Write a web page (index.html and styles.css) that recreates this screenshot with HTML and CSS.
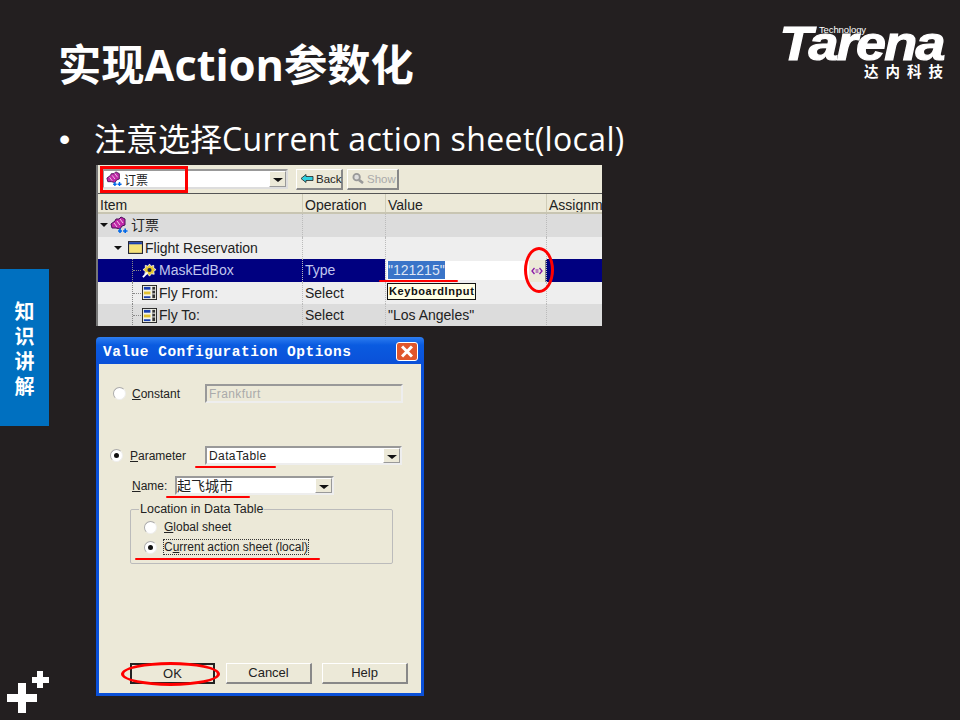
FILE: index.html
```html
<!DOCTYPE html>
<html lang="zh-CN">

<head>
    <meta charset="UTF-8">
    <title>实现Action参数化</title>
    <link rel="stylesheet" href="styles.css">
</head>

<body>
    <svg class="defs" width="0" height="0">
        <symbol id="action" viewBox="0 0 18 18">
            <path d="M1 8 L5 5 L6 3 L9 3 L11 1 L15 3 L15 9 L12 10 L10 13 L6 12 L2 12 Z" fill="#c02aa8" stroke="#4a1058"/>
            <path d="M4 7 L7 11 M7 5 L10 9 M10 3 L13 7" stroke="#f2c8ea"/>
            <path d="M8 15 H12 M10 12.500 V17 M13 15 H17.500 M15.200 12.500 V17" stroke="#0068e8" stroke-width="1.600"/>
        </symbol>
        <symbol id="list" viewBox="0 0 16 16">
            <rect x="0.500" y="0.500" width="15" height="15" fill="#f4f4e8" stroke="#222"/>
            <rect x="2" y="2" width="7" height="3" fill="#1a3fb0"/>
            <rect x="2" y="7" width="7" height="3" fill="#e0c030"/>
            <rect x="2" y="12" width="7" height="2" fill="#1a3fb0"/>
            <rect x="11" y="2" width="3" height="12" fill="#333"/>
            <path d="M11 5.500 H14 M11 9.500 H14" stroke="#fff"/>
        </symbol>
    </svg>

    <div class="slide">
        <header class="top">
            <h1 class="title">实现Action参数化</h1>
            <div class="logo">
                <span class="logo-small">Technology</span>
                <span class="logo-name">Tarena</span>
                <span class="logo-cn">达内科技</span>
            </div>
        </header>

        <p class="point"><span class="dot">•</span>注意选择<span class="point-en">Current action sheet(local)</span></p>

        <!-- 上面的截图 -->
        <div class="shot">
            <div class="toolbar">
                <div class="combo">
                    <svg class="ico-combo"><use href="#action"/></svg>
                    <span class="combo-text">订票</span>
                    <span class="arrow"></span>
                </div>
                <div class="tool-btn btn-back">
                    <svg class="back-ico" viewBox="0 0 14 10"><path d="M1 5 L6 1 V3 H13 V7 H6 V9 Z" fill="#30d0e0" stroke="#222" stroke-width="0.800"/></svg>Back
                </div>
                <div class="tool-btn btn-show off">
                    <svg class="back-ico" viewBox="0 0 14 12"><circle cx="5.500" cy="4.500" r="3.500" fill="#ddd" stroke="#999" stroke-width="2"/><path d="M8 7.500 L12.500 11" stroke="#999" stroke-width="2.800"/></svg>Show
                </div>
            </div>
            <div class="grid-row head">
                <div>Item</div><div>Operation</div><div>Value</div><div>Assignment</div>
            </div>
            <div class="grid-row odd">
                <div class="item"><span class="twist"></span><svg class="ico"><use href="#action"/></svg><span class="cn">订票</span></div><div></div><div></div><div></div>
            </div>
            <div class="grid-row even">
                <div class="item lvl1"><span class="twist"></span>
                    <svg class="ico-sm" viewBox="0 0 14 12"><rect x="0.500" y="0.500" width="13" height="11" fill="#f6e27a" stroke="#223"/><rect x="1" y="1" width="12" height="2" fill="#1a3fb0"/></svg>Flight Reservation</div><div></div><div></div><div></div>
            </div>
            <div class="grid-row sel">
                <div class="item lvl2">
                    <svg class="ico-sm" viewBox="0 0 16 16"><path d="M8 1 L9.500 3.500 L12.500 2.500 L12.500 5.500 L15 7 L12.500 9 L13 12 L10 11.500 L8 14 L6 11.500 L3 12 L3.500 9 L1 7 L3.500 5.500 L3.500 2.500 L6.500 3.500 Z" fill="#e8c830" stroke="#fff" stroke-width="0.800"/><circle cx="8" cy="7.500" r="2.200" fill="#1a2050"/><path d="M1 15 L6 10" stroke="#fff" stroke-width="2"/></svg>MaskEdBox</div>
                <div>Type</div>
                <div class="edit">
                    <div class="edit-box"><span class="picked">"121215"</span></div>
                    <span class="param-btn"><svg class="param-ico" viewBox="0 0 12 8"><path d="M3.500 1 L1 4 L3.500 7 M8.500 1 L11 4 L8.500 7" fill="none" stroke="#8a1aa8" stroke-width="1.300"/><path d="M4.500 3 H7.500 M4.500 5 H7.500" stroke="#8a1aa8"/></svg></span>
                </div>
                <div></div>
            </div>
            <div class="grid-row even">
                <div class="item lvl2"><svg class="ico-sm"><use href="#list"/></svg>Fly From:</div><div>Select</div><div></div><div></div>
            </div>
            <div class="grid-row odd">
                <div class="item lvl2"><svg class="ico-sm"><use href="#list"/></svg>Fly To:</div><div>Select</div><div>"Los Angeles"</div><div></div>
            </div>
            <div class="tip">KeyboardInput</div>
            <div class="mark box-combo"></div>
            <div class="mark line line-value"></div>
            <div class="mark ring ring-param"></div>
        </div>

        <!-- 下面的对话框 -->
        <div class="dialog">
            <div class="dlg-title">
                <span>Value Configuration Options</span>
                <span class="close"></span>
            </div>
            <div class="dlg-body">
                <div class="row row-const">
                    <span class="radio"></span>
                    <label class="lbl w-const"><u>C</u>onstant</label>
                    <div class="field off">Frankfurt</div>
                </div>
                <div class="row row-param">
                    <span class="radio on"></span>
                    <label class="lbl w-param"><u>P</u>arameter</label>
                    <div class="field select w-select">DataTable<span class="arrow"></span></div>
                </div>
                <div class="row row-name">
                    <label class="lbl w-name"><u>N</u>ame:</label>
                    <div class="field select w-name-select">起飞城市<span class="arrow"></span></div>
                </div>
                <fieldset class="group">
                    <legend>Location in Data Table</legend>
                    <div class="row">
                        <span class="radio"></span>
                        <label class="lbl"><u>G</u>lobal sheet</label>
                    </div>
                    <div class="row">
                        <span class="radio on"></span>
                        <label class="lbl focus">C<u>u</u>rrent action sheet (local)</label>
                    </div>
                </fieldset>
                <div class="buttons">
                    <div class="btn default">OK</div>
                    <div class="btn">Cancel</div>
                    <div class="btn">Help</div>
                </div>
            </div>
            <div class="mark line line-data"></div>
            <div class="mark line line-name"></div>
            <div class="mark line line-current"></div>
            <div class="mark ring ring-ok"></div>
        </div>

        <div class="side-tab"><span>知</span><span>识</span><span>讲</span><span>解</span></div>

        <svg class="plus" viewBox="0 0 44 44">
            <rect x="0" y="23" width="30" height="8" fill="#fff"/>
            <rect x="11" y="12" width="8" height="30" fill="#fff"/>
            <rect x="25" y="6" width="17" height="6" fill="#fff"/>
            <rect x="30" y="0" width="6" height="17" fill="#fff"/>
        </svg>
    </div>
</body>

</html>
```

FILE: styles.css
```css
* {
    box-sizing: border-box;
}

body {
    margin: 0;
    background: #231f20;
}

.defs {
    display: none;
}

.slide {
    position: relative;
    width: 960px;
    height: 720px;
    overflow: hidden;
    background: #231f20;
    color: #fff;
    font-family: "Open Sans", "Noto Sans CJK SC", sans-serif;
}

.top {
    display: flex;
    justify-content: space-between;
    align-items: flex-start;
    height: 114px;
    padding: 26px 16px 0 58px;
}

.title {
    margin: 12px 0 0;
    font-size: 43.300px;
    line-height: 54px;
    font-weight: 700;
}

.logo {
    display: flex;
    flex-direction: column;
    align-items: flex-end;
    width: 162px;
    font-family: "Liberation Sans", "Noto Sans CJK SC", sans-serif;
}

.logo-small {
    height: 8px;
    margin-right: 78px;
    font-size: 9.500px;
    line-height: 8px;
    letter-spacing: -0.1px;
}

.logo-name {
    height: 34px;
    margin-top: -7px;
    font-size: 48px;
    line-height: 34px;
    font-weight: 700;
    font-style: italic;
    letter-spacing: -1.500px;
    -webkit-text-stroke: 1.200px #fff;
    transform: scaleX(1.12);
    transform-origin: right center;
}

.logo-cn {
    margin-top: 4px;
    margin-right: -6px;
    font-size: 14.500px;
    line-height: 15px;
    font-weight: 700;
    letter-spacing: 7px;
}

.point {
    display: flex;
    height: 44px;
    margin: 3px 0 4px 59px;
    font-size: 32px;
    line-height: 44px;
}

.point-en {
    letter-spacing: 0.370px;
}

.dot {
    width: 35px;
    font-family: "Liberation Sans", sans-serif;
}

/* screenshot */
.shot {
    position: relative;
    width: 506px;
    height: 161px;
    margin-left: 96px;
    overflow: hidden;
    background: #ece9d8;
    color: #222;
    font-family: "Liberation Sans", "Noto Sans CJK SC", sans-serif;
    font-size: 14px;
    border-left: 2px solid #777;
}

.toolbar {
    display: flex;
    align-items: center;
    gap: 8px;
    height: 29px;
    padding: 0 0 0 4px;
    border-bottom: 1px solid #555;
    font-size: 12px;
}

.combo {
    position: relative;
    display: flex;
    align-items: center;
    width: 186px;
    height: 20px;
    padding-left: 2px;
    background: #fff;
    border: 2px solid #999;
    border-right-color: #ddd;
    border-bottom-color: #ddd;
}

.ico-combo {
    flex: none;
    width: 16px;
    height: 16px;
}

.combo-text {
    margin-left: 2px;
    font-size: 12px;
}

.arrow {
    position: absolute;
    top: 0;
    right: 0;
    bottom: 0;
    width: 17px;
    background: #ece9d8;
    border: 1px solid #999;
    border-top-color: #fff;
    border-left-color: #fff;
}

.arrow::after {
    content: "";
    position: absolute;
    top: 6px;
    left: 3px;
    border: 5px solid transparent;
    border-top: 4px solid #111;
    border-bottom: 0;
}

.tool-btn {
    display: flex;
    align-items: center;
    gap: 2px;
    height: 21px;
    padding: 0 3px;
    background: #ece9d8;
    border: 1px solid #fff;
    border-right: 2px solid #888;
    border-bottom: 2px solid #888;
}

.btn-back {
    width: 47px;
    font-size: 11.500px;
}

.btn-show {
    width: 52px;
    margin-left: -4px;
    font-size: 11.500px;
}

.tool-btn.off {
    color: #aaa;
}

.back-ico {
    flex: none;
    width: 14px;
    height: 11px;
}

.ico {
    flex: none;
    width: 18px;
    height: 18px;
}

.ico-sm {
    flex: none;
    width: 15px;
    height: 15px;
    margin-right: 2px;
}

.grid-row {
    display: grid;
    grid-template-columns: 204px 83px 161px 58px;
    height: 22.500px;
    line-height: 22px;
}

.grid-row > div {
    padding-left: 2px;
    white-space: nowrap;
    overflow: hidden;
    border-left: 1px dotted #bbb;
}

.grid-row > div:first-child {
    border-left: 0;
}

.head {
    height: 20px;
    line-height: 22px;
    border-bottom: 2px solid #c8c5b2;
}

.head > div {
    border-left: 1px solid #d0cdb8;
}

.odd {
    background: #dcdcdc;
}

.even {
    background: #eeeeee;
}

.sel {
    background: #000080;
    color: #c0c6ee;
}

.item {
    position: relative;
    display: flex;
    align-items: center;
}

.lvl1 {
    padding-left: 16px !important;
}

.lvl2 {
    padding-left: 44px !important;
}

/* tree lines */
.lvl2::before {
    content: "";
    position: absolute;
    top: 0;
    bottom: 0;
    left: 34px;
    border-left: 1px dotted #888;
}

.lvl2::after {
    content: "";
    position: absolute;
    top: 11px;
    left: 35px;
    width: 8px;
    border-top: 1px dotted #888;
}

.twist {
    flex: none;
    width: 0;
    height: 0;
    margin-right: 2px;
    border: 4px solid transparent;
    border-top: 4px solid #111;
    border-bottom: 0;
}

.cn {
    margin-left: 3px;
}

.lvl1 .ico-sm {
    margin-left: 4px;
}

.edit {
    display: flex;
    padding-left: 0 !important;
    background: #eee;
}

.edit-box {
    flex: 1;
    height: 19px;
    margin: 2px 0 0 1px;
    padding-left: 1px;
    background: #fff;
    line-height: 18px;
    color: #222;
}

.picked {
    display: inline-block;
    background: #3a74c8;
    color: #dfe6f5;
}

.param-btn {
    display: flex;
    align-items: center;
    justify-content: center;
    width: 17px;
    margin-top: 1px;
    background: #ece9d8;
    border-right: 1px solid #888;
}

.param-ico {
    width: 12px;
    height: 8px;
}

.tip {
    position: absolute;
    top: 118px;
    left: 289px;
    height: 17px;
    padding: 0 1px;
    background: #ffffe6;
    border: 1px solid #111;
    color: #111;
    font-size: 11px;
    font-weight: 700;
    line-height: 15px;
    letter-spacing: 0.600px;
}

/* red annotations */
.mark {
    position: absolute;
    pointer-events: none;
}

.box-combo {
    top: 1px;
    left: 2px;
    width: 88px;
    height: 27px;
    border: 3px solid #f00;
}

.line {
    height: 2px;
    background: #f00;
    border-radius: 1px;
}

.line-value {
    top: 115px;
    left: 281px;
    width: 79px;
}

.ring {
    border: 3px solid #f00;
    border-radius: 50%;
}

.ring-param {
    top: 82px;
    left: 426px;
    width: 30px;
    height: 46px;
}

/* dialog */
.dialog {
    position: relative;
    display: flex;
    flex-direction: column;
    width: 328px;
    height: 359px;
    margin: 11px 0 0 96px;
    font-family: "Liberation Sans", "Noto Sans CJK SC", sans-serif;
    font-size: 12px;
    color: #222;
}

.dlg-title {
    display: flex;
    align-items: center;
    justify-content: space-between;
    height: 27px;
    padding: 2px 6px 0 7px;
    background: linear-gradient(#2d7df0, #0a5be0 30%, #0a50d8);
    border-radius: 4px 4px 0 0;
    color: #fff;
    font-family: "Liberation Mono", monospace;
    font-size: 14.500px;
    font-weight: 700;
    letter-spacing: 0.500px;
}

.close {
    position: relative;
    width: 22px;
    height: 19px;
    background: #e0562c;
    border: 1px solid #fff;
    border-radius: 3px;
}

.close::before,
.close::after {
    content: "";
    position: absolute;
    top: 7px;
    left: 3px;
    width: 14px;
    height: 3px;
    background: #fff;
    transform: rotate(45deg);
}

.close::after {
    transform: rotate(-45deg);
}

.dlg-body {
    flex: 1;
    display: flex;
    flex-direction: column;
    padding-top: 20px;
    background: #ece9d8;
    border: 3px solid #0a50d8;
    border-top: 0;
}

.row {
    display: flex;
    align-items: center;
}

.row-const {
    margin-left: 14px;
    gap: 6px;
}

.row-param {
    margin: 43px 0 0 11px;
    gap: 7px;
}

.row-name {
    margin: 11px 0 0 33px;
}

.radio {
    position: relative;
    flex: none;
    width: 13px;
    height: 13px;
    background: #fff;
    border: 1px solid #aaa;
    border-right-color: #eee;
    border-bottom-color: #eee;
    border-radius: 50%;
}

.radio.on::after {
    content: "";
    position: absolute;
    top: 3px;
    left: 3px;
    width: 5px;
    height: 5px;
    background: #111;
    border-radius: 50%;
}

.w-const {
    width: 67px;
}

.w-param {
    width: 68px;
}

.w-name {
    width: 43px;
}

.field {
    position: relative;
    width: 198px;
    height: 19px;
    padding-left: 2px;
    background: #fff;
    border: 2px solid #999;
    border-right-color: #eee;
    border-bottom-color: #eee;
    line-height: 16px;
    font-size: 12px;
    letter-spacing: 0.400px;
}

.field.off {
    background: #ece9d8;
    color: #aaa;
}

.w-select {
    width: 197px;
}

.w-name-select {
    width: 159px;
    padding-left: 0;
    font-size: 14px;
    letter-spacing: 0;
}

.group {
    width: 263px;
    height: 62px;
    margin: 7px 0 0 31px;
    padding: 1px 0 0 13px;
    border: 1px solid #bbb;
    border-radius: 2px;
}

.group legend {
    margin-left: -5px;
    padding: 0 1px;
    font-size: 12.500px;
    line-height: 14px;
}

.group .row {
    gap: 7px;
    height: 20px;
}

.focus {
    outline: 1px dotted #333;
}

.buttons {
    display: flex;
    gap: 10px;
    margin: auto 0 9px 31px;
}

.btn {
    width: 86px;
    height: 21px;
    background: #ece9d8;
    border: 1px solid #fff;
    border-right: 2px solid #888;
    border-bottom: 2px solid #888;
    text-align: center;
    line-height: 18px;
    font-size: 13px;
}

.btn.default {
    width: 85px;
    margin-right: 1px;
    border: 2px solid #222;
}

.line-data {
    top: 129px;
    left: 99px;
    width: 81px;
}

.line-name {
    top: 159px;
    left: 70px;
    width: 84px;
}

.line-current {
    top: 221px;
    left: 39px;
    width: 185px;
}

.ring-ok {
    top: 325px;
    left: 25px;
    width: 99px;
    height: 24px;
}

/* side parts */
.side-tab {
    position: absolute;
    top: 269px;
    left: 0;
    display: flex;
    flex-direction: column;
    align-items: center;
    width: 49px;
    height: 157px;
    padding-top: 29px;
    background: #0070c0;
    font-family: "Noto Sans CJK SC", sans-serif;
    font-size: 20px;
    font-weight: 700;
    line-height: 25px;
}

.plus {
    position: absolute;
    top: 671px;
    left: 7px;
    width: 44px;
    height: 44px;
}
```
